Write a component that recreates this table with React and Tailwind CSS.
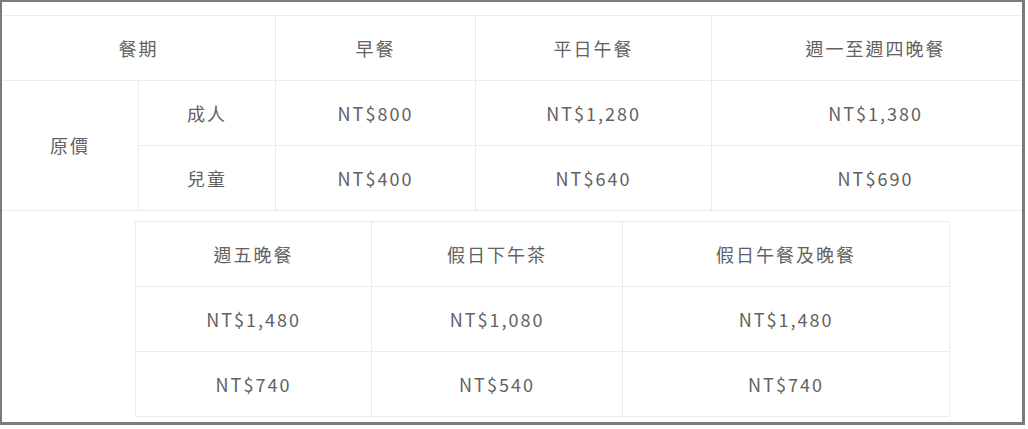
import React from 'react';

const topRows = [
  { label: '成人', prices: ['NT$800', 'NT$1,280', 'NT$1,380'] },
  { label: '兒童', prices: ['NT$400', 'NT$640', 'NT$690'] },
];

const bottomHeads = ['週五晚餐', '假日下午茶', '假日午餐及晚餐'];
const bottomRows = [
  ['NT$1,480', 'NT$1,080', 'NT$1,480'],
  ['NT$740', 'NT$540', 'NT$740'],
];

const Cell = ({ children, className = '' }) => (
  <div className={`flex items-center justify-center bg-white ${className}`}>{children}</div>
);

const App = () => {
  return (
    <div
      className="w-[1025px] h-[425px] overflow-hidden border-t-2 border-l-2 border-r-[3px] border-b-[3px] border-[#7b7b7b] bg-white text-[18px] tracking-[2px] text-[#626262]"
      style={{ fontFamily: '"Noto Sans CJK TC", "Noto Sans", sans-serif' }}
    >
      <div className="pt-[13px]">
        {/* upper price table */}
        <div className="grid w-max grid-cols-[136px_136px_199px_235px_327px] grid-rows-[64px_64px_64px] gap-px bg-[#ebebeb] py-px">
          <Cell className="col-span-2">餐期</Cell>
          <Cell>早餐</Cell>
          <Cell>平日午餐</Cell>
          <Cell>週一至週四晚餐</Cell>
          <Cell className="row-span-2">原價</Cell>
          {topRows.map((row) => (
            <React.Fragment key={row.label}>
              <Cell>{row.label}</Cell>
              {row.prices.map((p, i) => (
                <Cell key={i}>{p}</Cell>
              ))}
            </React.Fragment>
          ))}
        </div>

        {/* lower price table */}
        <div className="mt-[10px] ml-[133px] grid w-max grid-cols-[235px_250px_326px] grid-rows-[64px_64px_64px] gap-px bg-[#ebebeb] p-px">
          {bottomHeads.map((h) => (
            <Cell key={h}>{h}</Cell>
          ))}
          {bottomRows.map((row, r) =>
            row.map((p, i) => <Cell key={`${r}-${i}`}>{p}</Cell>)
          )}
        </div>
      </div>
    </div>
  );
};

export default App;
